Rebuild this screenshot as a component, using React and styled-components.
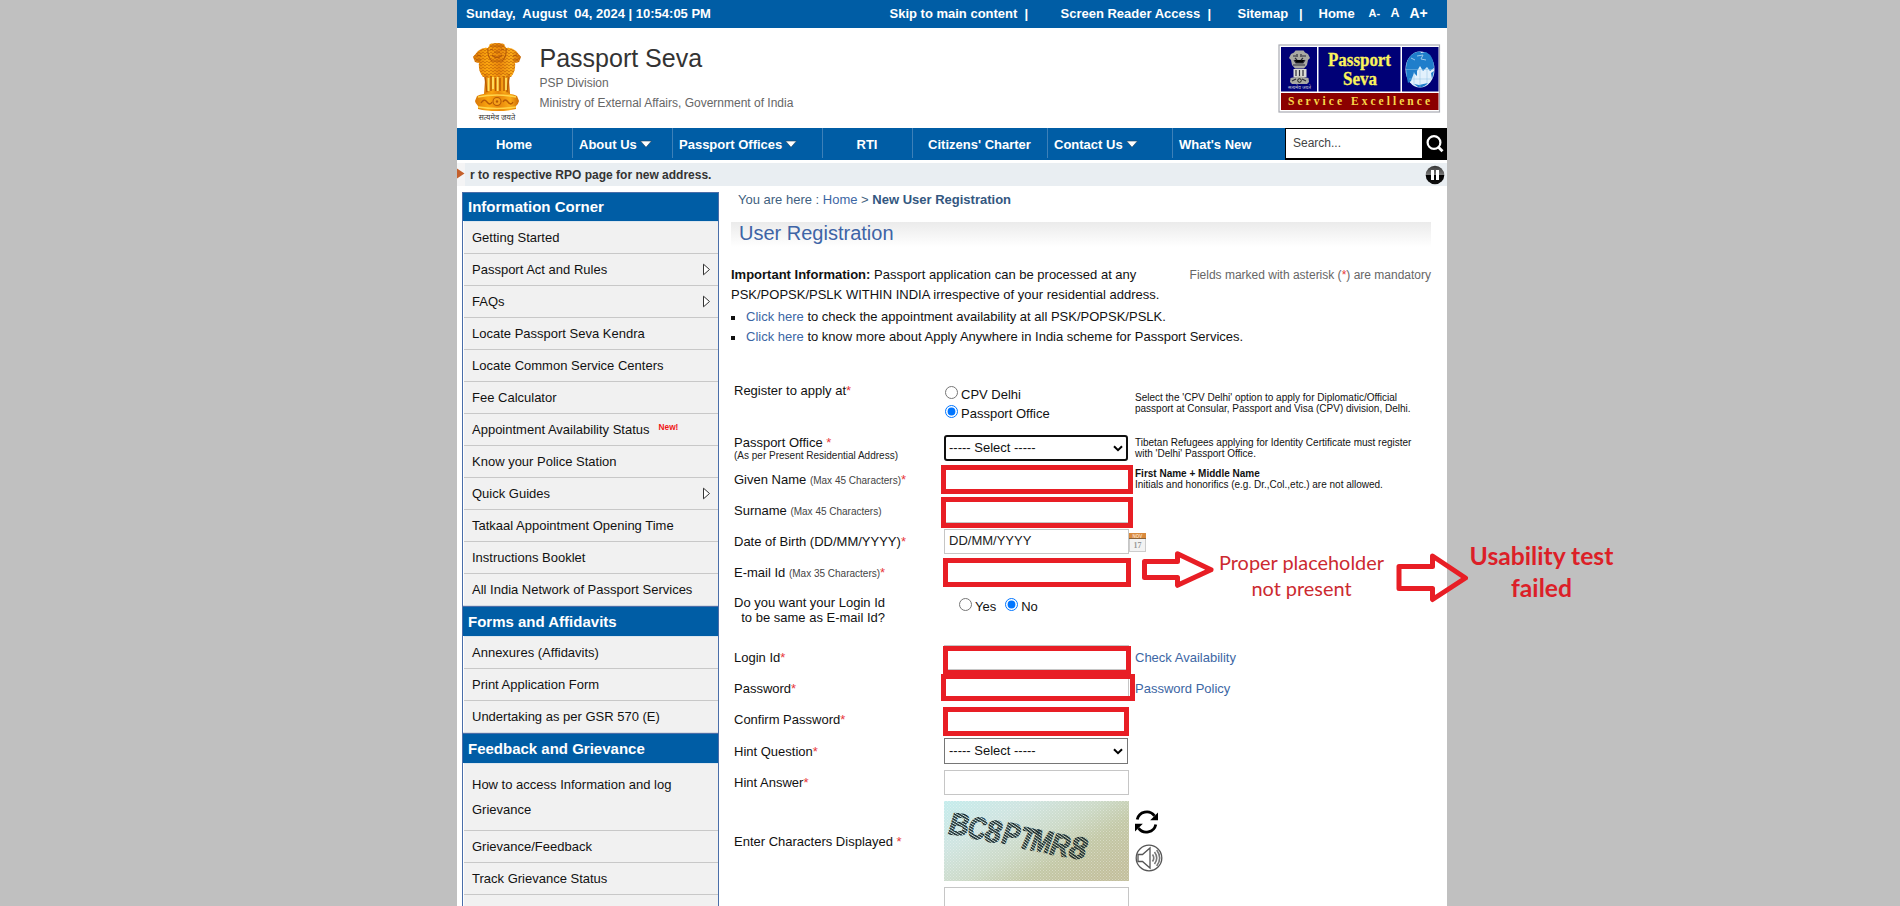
import React from "react";
import styled, { createGlobalStyle } from "styled-components";

const BLUE = "#005da5";
const RED = "#e81e25";

const GlobalStyle = createGlobalStyle`
  html, body { margin: 0; padding: 0; background: #c0c0c0; }
  body { height: 906px; overflow: hidden; font: 13px "Liberation Sans", Arial, sans-serif; color: #111; }
  * { box-sizing: border-box; }
`;

const Screen = styled.div`
  position: relative;
  width: 1900px;
  height: 906px;
  overflow: hidden;
`;
const Page = styled.div`
  width: 990px;
  height: 906px;
  margin-left: 457px;
  background: #fff;
  overflow: hidden;
`;

/* ---------- top bar ---------- */
const TopBar = styled.div`
  height: 28px;
  background: ${BLUE};
  color: #fff;
  font-weight: bold;
  display: flex;
  align-items: center;
  padding: 0 19px 2px 9px;
  white-space: pre;
`;
const TopLinks = styled.div`
  display: flex;
  align-items: center;
  margin-left: auto;
`;
const TopLink = styled.span`
  width: ${(p) => p.$w}px;
  font-size: ${(p) => p.$size || 13}px;
`;

/* ---------- header ---------- */
const Header = styled.header`
  height: 100px;
  display: flex;
  padding: 15px 6px 0 14px;
`;
const Brand = styled.div`
  margin-left: 17.5px;
  display: flex;
  flex-direction: column;
`;
const BrandTitle = styled.h1`
  margin: -1px 0 -1px;
  font-weight: normal;
  font-size: 25px;
  line-height: 32px;
  color: #333;
`;
const BrandLine = styled.div`
  font-size: 12px;
  line-height: 20px;
  color: #666;
`;
const LogoSlot = styled.div`
  margin: 1px 0 0 auto;
`;

/* ---------- navigation ---------- */
const Nav = styled.nav`
  height: 32px;
  background: ${BLUE};
  display: flex;
  color: #fff;
  font-weight: bold;
`;
const NavItem = styled.div`
  width: ${(p) => p.$w}px;
  height: 30px;
  padding: ${(p) => (p.$center ? "2px 1px 0 0" : "2px 0 0 6px")};
  border-right: ${(p) => (p.$last ? "0" : "1px solid #3d80b8")};
  display: flex;
  align-items: center;
  gap: 3px;
  justify-content: ${(p) => (p.$center ? "center" : "flex-start")};
`;
const SearchBox = styled.div`
  flex: 1;
  display: flex;
  background: #000;
  padding: 1px 0 0 1px;
`;
const SearchInput = styled.div`
  width: 136px;
  height: 29px;
  background: #fff;
  color: #444;
  font: 12px "Liberation Sans", Arial, sans-serif;
  line-height: 29px;
  padding-left: 7px;
`;
const SearchButton = styled.div`
  flex: 1;
  display: flex;
  justify-content: center;
  padding-top: 5px;
`;

/* ---------- ticker ---------- */
const Ticker = styled.div`
  margin-top: 3px;
  height: 23px;
  display: flex;
  align-items: center;
  background: #e9eef2;
  padding-right: 2px;
  font-size: 12px;
  font-weight: bold;
  color: #333;
`;
const TickerArrow = styled.div`
  width: 8px;
  height: 23px;
  margin-right: 5px;
  background: #f4f4f5;
`;
const TickerText = styled.span`
  flex: 1;
`;

/* ---------- body ---------- */
const Columns = styled.div`
  display: flex;
  padding: 6px 16px 0 5px;
`;
const Sidebar = styled.aside`
  width: 257px;
  border: 1px solid #4a6ea9;
  border-bottom: 0;
  flex: none;
`;
const SideTitle = styled.div`
  height: ${(p) => (p.$first ? 28 : 29)}px;
  border-top: ${(p) => (p.$first ? "0" : "1px solid #4a6ea9")};
  box-sizing: content-box;
  background: ${BLUE};
  color: #fff;
  font-weight: bold;
  font-size: 15px;
  line-height: ${(p) => (p.$first ? 28 : 30)}px;
  padding-left: 5px;
`;
const SideItem = styled.div`
  margin: 0 0 0 1px;
  border-top: 1px solid ${(p) => (p.$top ? "#dde6ee" : "#c8c8c8")};
  background: #f1f1f1;
  height: ${(p) => p.$h || 32}px;
  padding: ${(p) => (p.$h ? "8px 20px 8px 8px" : "0 6px 0 8px")};
  display: flex;
  align-items: center;
  line-height: 25px;
`;
const SideEnd = styled.div`
  height: 1px;
  background: #d5dbe2;
`;
const SideLabel = styled.span`
  flex: 1;
`;
const NewTag = styled.sup`
  font-size: 8.3px;
  font-weight: bold;
  line-height: 0;
  color: #f01616;
  margin-left: 9px;
  vertical-align: 4px;
`;

const Main = styled.main`
  margin-left: 12px;
  width: 700px;
`;
const Crumbs = styled.div`
  height: 30px;
  line-height: 15px;
  padding-left: 7px;
  color: #3f5f80;
  b { color: #33577f; }
`;
const PageTitle = styled.h2`
  margin: 0;
  height: 25px;
  padding-left: 8px;
  line-height: 23px;
  font-size: 20px;
  font-weight: normal;
  color: #3e64a6;
  background: linear-gradient(#ebebeb, #fff);
`;
const Notice = styled.div`
  margin-top: 18px;
  display: flex;
  justify-content: space-between;
  line-height: 20px;
`;
const Mandatory = styled.div`
  font-size: 12px;
  color: #666;
`;
const Star = styled.span`
  color: #e8373a;
`;
const Links = styled.ul`
  list-style: none;
  margin: 2px 0 0;
  padding: 0;
  line-height: 20px;
  li { display: flex; align-items: center; }
`;
const Bullet = styled.i`
  width: 4px;
  height: 4px;
  background: #111;
  margin-right: 11px;
  margin-top: 1px;
`;
const Link = styled.a`
  color: #3c66a4;
`;
const Spaced = styled.span`
  white-space: pre;
`;

/* ---------- form ---------- */
const Form = styled.div`
  margin-top: 32px;
`;
const Row = styled.div`
  display: grid;
  grid-template-columns: 210px 191px 1fr;
  height: ${(p) => p.$h}px;
  padding-left: 3px;
`;
const Label = styled.div`
  padding-top: ${(p) => p.$top}px;
  line-height: 15px;
  white-space: pre;
`;
const Small = styled.span`
  font-size: 10px;
  line-height: 11px;
  color: ${(p) => p.$color || "#222"};
  display: ${(p) => (p.$block ? "block" : "inline")};
`;
const Cell = styled.div`
  padding-top: ${(p) => p.$top || 0}px;
`;
const Hint = styled.div`
  padding-top: ${(p) => p.$top}px;
  font-size: 10px;
  line-height: 11px;
  white-space: nowrap;
`;
const Inline = styled.div`
  display: flex;
  align-items: flex-start;
`;
const TextInput = styled.div`
  flex: none;
  width: 185px;
  height: 25px;
  border: 1px solid #c6c6c6;
  background: #fff;
  line-height: 22px;
  padding-left: 4px;
  color: #222;
`;
const SelectWrap = styled.div`
  width: 184px;
  height: 26px;
  background: #fff;
  border: ${(p) => (p.$focus ? "2px solid #101010" : "1px solid #767676")};
  border-radius: ${(p) => (p.$focus ? 3 : 0)}px;
  padding: 0 ${(p) => (p.$focus ? 3 : 4)}px;
  display: flex;
  align-items: center;
  justify-content: space-between;
`;
const SelectText = styled.span`
  margin-top: -1px;
`;
const Choice = styled.label`
  display: flex;
  align-items: flex-start;
  height: 19px;
  line-height: 17px;
  margin-left: ${(p) => p.$left || 0}px;
  input { width: 13px; height: 13px; margin: 0 3px 0 1px; }
`;
const IconStack = styled.div`
  display: flex;
  flex-direction: column;
  gap: 10px;
  padding-top: 12px;
`;
const CalendarSlot = styled.span`
  display: flex;
  flex: none;
  padding-top: 4px;
`;

/* ---------- review marks ---------- */
const Mark = styled.div`
  position: absolute;
  left: ${(p) => p.$x}px;
  top: ${(p) => p.$y}px;
  width: ${(p) => p.$w}px;
  height: ${(p) => p.$h}px;
  border: 5px solid ${RED};
`;
const ArrowLayer = styled.svg`
  position: absolute;
  left: 1138px;
  top: 546px;
`;
const Note = styled.div`
  position: absolute;
  left: ${(p) => p.$x}px;
  top: ${(p) => p.$y}px;
  width: ${(p) => p.$w}px;
  text-align: center;
  font: ${(p) => (p.$bold ? "bold 24.7px/32px" : "19.9px/26px")} Lato, sans-serif;
  color: ${(p) => (p.$bold ? "#dc1f28" : "#cc2a30")};
`;

const Caret = () => (
  <svg width="12" height="8" viewBox="0 0 12 8">
    <path d="M.5 1h11L6 7.300z" fill="#fff" stroke="#243f58" strokeWidth="0.6" />
  </svg>
);

const Emblem = () => (
  <svg width="50" height="72" viewBox="0 0 50 72">
    <defs>
      <linearGradient id="gold" x1="0" x2="1">
        <stop offset="0" stopColor="#d97706" />
        <stop offset=".3" stopColor="#fba50f" />
        <stop offset=".55" stopColor="#e8860b" />
        <stop offset=".8" stopColor="#fbab18" />
        <stop offset="1" stopColor="#cc6a05" />
      </linearGradient>
      <pattern id="curl" width="4" height="3" patternUnits="userSpaceOnUse">
        <path d="M0 1Q1 3 2 1T4 1" fill="none" stroke="#b85a05" strokeWidth=".7" opacity=".75" />
      </pattern>
    </defs>
    <g fill="url(#gold)">
      <path d="M18 1q7-2 14 0l2 4q5-1 10 3l5 6-2 5-4 1q1 8-4 14H11q-5-6-4-14l-4-1-2-5 5-6q5-4 10-3z" />
      <path d="M12 31h26l-1 6 1 14H12l1-14z" />
      <path d="M5 53q5-3 20-3t20 3l2 5q-1 4-3 5v3q-8 2-19 2T6 66v-3q-3-3-3-5z" />
    </g>
    <path d="M18 1q7-2 14 0l2 4q5-1 10 3l5 6-2 5-4 1q1 8-4 14H11q-5-6-4-14l-4-1-2-5 5-6q5-4 10-3z" fill="url(#curl)" />
    <path d="M18 3h14M18 7l3-1M29 6l3 1M20 12q5 5 10 0M22 9h6M16 5q-1 9 4 13h10q5-4 4-13M5 12l4 1M41 13l4-1M4 17h5M41 17h5" fill="none" stroke="#b45a08" strokeWidth="1.100" />
    <path d="M13 34l2 15M19 33v15M23.500 35v13M28 35v13M32 33v15M37 34l-2 15" stroke="#b65a04" strokeWidth="1.4" />
    <path d="M16.500 35v13M25.700 34v14M34 35v12M21 34v12" stroke="#ffdf62" strokeWidth="1.8" />
    <path d="M6 54q19-4 38 0M6 64q19 3 38 0" fill="none" stroke="#ffd54a" strokeWidth="1.4" />
    <circle cx="25" cy="58.500" r="4" fill="#f6a11a" stroke="#b55a06" strokeWidth="1.1" />
    <circle cx="25" cy="58.500" r="1.200" fill="#b55a06" />
    <path d="M9 60q3-5 6-1t5 0M31 59q2-4 5 0t5 0" fill="none" stroke="#b55a06" strokeWidth="1.3" />
  </svg>
);
const EmblemBlock = styled.div`
  width: 50px;
  margin-left: 1px;
`;
const Motto = styled.div`
  font: 7.5px "Noto Sans Devanagari", "Noto Sans", sans-serif;
  line-height: 8px;
  margin-top: -4px;
  white-space: nowrap;
  text-align: center;
  color: #333;
`;

const Logo = () => (
  <svg width="163" height="69" viewBox="0 0 163 69">
    <rect x="1" y="1" width="160.500" height="67" fill="#fff" stroke="#a9abb2" strokeWidth="1.200" />
    <rect x="3" y="3" width="36" height="44.500" fill="#000076" />
    <rect x="40.500" y="3" width="82" height="44.500" fill="#000076" />
    <rect x="124" y="3" width="36.500" height="44.500" fill="#000076" />
    <rect x="3" y="49" width="157.500" height="17" fill="#8b0000" />
    <g fill="#a9a9a2">
      <path d="M17.500 6.500h8l1.500 2 3 1.500 2 4-2 2-1 5-3 3.500H17l-3-3.500-1-5-2-2 2-4 3-1.500z" />
      <path d="M15.500 25h13v8h-13z" fill="#dcdcd4" />
      <path d="M12.500 34q9-3 18 0l.500 4-2 2H14l-2-2z" />
    </g>
    <path d="M15 12h3M24 12h4M19 10v3M23 10v3M16 16l2 3h7l2-3M18 26v6M21.500 26v6M25 26v6M14 37l4-2M28 37l-4-2M15 21h12M17 14l2 2M25 14l-2 2" stroke="#2d2d3a" strokeWidth="1.200" />
    <circle cx="21.500" cy="36.500" r="1.800" fill="none" stroke="#111" strokeWidth=".9" />
    <text x="10" y="45" fontSize="5" fill="#c9c9d8" textLength="23" lengthAdjust="spacingAndGlyphs" fontFamily="Noto Sans Devanagari, Noto Sans, sans-serif">सत्यमेव जयते</text>
    <g fontFamily="Liberation Serif, serif" fontWeight="bold" fill="#fbf35c" stroke="#fbf35c" strokeWidth=".3">
      <text x="50" y="22" fontSize="18" textLength="63" lengthAdjust="spacingAndGlyphs">Passport</text>
      <text x="65" y="41" fontSize="18" textLength="34" lengthAdjust="spacingAndGlyphs">Seva</text>
      <text x="10" y="61" fontSize="11.500" fill="#f8d84a" stroke="none" textLength="142">Service Excellence</text>
    </g>
    <ellipse cx="142" cy="25.500" rx="14.500" ry="18" fill="#e2f1fc" />
    <path d="M128 24q0-10 8-15 7-3 7 0l5-1q8 4 8 16l-4 3-3-4-4 4-3-5-3 5 0 5-3-3-3 8-3 2q-2-7-2-15zM153 29l3-2-2 8zM150 39q-4 5-10 4l-4-3 5 1z" fill="#1f7ecb" />
    <path d="M128 25.500h28M131 35h22M142 26v17M149 24v15M136 28v13" stroke="#8fc0e6" strokeWidth=".5" />
    <path d="M139 12l6-1-2 4 5 1M133 14l4 2" fill="none" stroke="#9cc9ea" strokeWidth="1" />
  </svg>
);

const SearchIcon = () => (
  <svg width="20" height="20" viewBox="0 0 20 20" fill="none" stroke="#fff" strokeWidth="2.200">
    <circle cx="9" cy="8.500" r="6.400" />
    <path d="M13.500 13.200l4 4" strokeWidth="2.800" />
  </svg>
);

const PauseIcon = () => (
  <svg width="20" height="20" viewBox="0 0 20 20">
    <defs>
      <linearGradient id="pause" x1="0" y1="0" x2="0" y2="1">
        <stop offset="0" stopColor="#333" />
        <stop offset=".48" stopColor="#777" />
        <stop offset=".5" stopColor="#000" />
        <stop offset="1" stopColor="#111" />
      </linearGradient>
    </defs>
    <circle cx="10" cy="10" r="9.300" fill="url(#pause)" />
    <path d="M6 5h3v10H6zM11 5h3v10h-3z" fill="#fff" />
  </svg>
);

const CalendarIcon = () => (
  <svg width="17" height="19" viewBox="0 0 17 19">
    <rect x=".5" y=".5" width="16" height="18" fill="#f3f3f3" stroke="#ccc" />
    <rect x="0" y="0" width="17" height="6" fill="#d98a3d" />
    <rect x="0" y="5" width="17" height="1" fill="#8a6238" />
    <text x="3.500" y="4.800" fontSize="4.500" fontWeight="bold" fill="#f7dcc0" fontFamily="Liberation Sans">NOV</text>
    <text x="4.500" y="15" fontSize="8" fill="#999" fontWeight="bold" fontFamily="Liberation Serif">17</text>
  </svg>
);

const Chevron = () => (
  <svg width="10" height="7" viewBox="0 0 10 7">
    <path d="M1 1.200L5 5.200 9 1.200" fill="none" stroke="#000" strokeWidth="2" />
  </svg>
);

const RefreshIcon = () => (
  <svg width="24" height="24" viewBox="0 0 24 24" fill="none" stroke="#000" strokeWidth="2.800">
    <path d="M2.200 9.500A9.700 9.700 0 0 1 19.500 5.800" />
    <path d="M20.800 14.500A9.700 9.700 0 0 1 3.500 18.200" />
    <path d="M23 2.500v7.800h-7.800z" fill="#000" stroke="none" />
    <path d="M0 21.500v-7.800h7.800z" fill="#000" stroke="none" />
  </svg>
);

const SpeakerIcon = () => (
  <svg width="28" height="28" viewBox="0 0 28 28" fill="none" stroke="#555" strokeWidth="1.300">
    <circle cx="14" cy="14" r="12.800" />
    <path d="M3 10.500h4.500l7.500-6.500v20l-7.500-6.500H3z" />
    <path d="M17.500 10.500q2.500 3.500 0 7M19.500 8q4.500 6 0 12M21.700 6q6 8 0 16" strokeWidth="1.600" stroke="#777" />
  </svg>
);

const LETTERS = [
  ["B", 4, 33, 6, 20], ["C", 23, 37, 6, 18], ["8", 40, 40, 8, 16], ["P", 57, 42, 10, 17],
  ["T", 73, 46, 14, 16], ["M", 86, 49, 10, 20], ["R", 105, 53, 10, 19], ["8", 124, 56, 10, 17],
];
const Captcha = () => (
  <svg width="185" height="80" viewBox="0 0 185 80">
    <defs>
      <linearGradient id="cap" x1="0" y1="0" x2="1" y2=".75">
        <stop offset="0" stopColor="#c4ecec" />
        <stop offset=".3" stopColor="#cfe4e0" />
        <stop offset=".55" stopColor="#cbd9c6" />
        <stop offset=".75" stopColor="#c3c8a6" />
        <stop offset="1" stopColor="#c2bf9c" />
      </linearGradient>
      <pattern id="mesh" width="3" height="3" patternUnits="userSpaceOnUse">
        <path d="M0 0h1v1H0zM1.500 1.500h1v1h-1z" fill="#fff" opacity=".35" />
      </pattern>
      <pattern id="stripe" width="2.400" height="2.400" patternUnits="userSpaceOnUse" patternTransform="rotate(25)">
        <path d="M0 0h2.400v1.400H0z" fill="#18292d" />
      </pattern>
    </defs>
    <rect width="185" height="80" fill="url(#cap)" />
    <rect width="185" height="80" fill="url(#mesh)" />
    {LETTERS.map(([ch, x, y, r, w], i) => (
      <text
        key={i}
        x={x}
        y={y}
        transform={`rotate(${r} ${x} ${y})`}
        fontFamily="Liberation Sans, Arial, sans-serif"
        fontStyle="italic"
        fontWeight="bold"
        fontSize="31"
        textLength={w}
        lengthAdjust="spacingAndGlyphs"
        fill="url(#stripe)"
        stroke="url(#stripe)"
        strokeWidth="1.200"
      >
        {ch}
      </text>
    ))}
  </svg>
);

const NAV = [
  { text: "Home", w: 116, center: true },
  { text: "About Us", w: 100, menu: true },
  { text: "Passport Offices", w: 150, menu: true },
  { text: "RTI", w: 90, center: true },
  { text: "Citizens' Charter", w: 135, center: true },
  { text: "Contact Us", w: 125, menu: true },
  { text: "What's New", w: 112, last: true },
];

const SECTIONS = [
  ["Information Corner", [
    ["Getting Started"], ["Passport Act and Rules", "sub"], ["FAQs", "sub"], ["Locate Passport Seva Kendra"],
    ["Locate Common Service Centers"], ["Fee Calculator"], ["Appointment Availability Status", "new"],
    ["Know your Police Station"], ["Quick Guides", "sub"], ["Tatkaal Appointment Opening Time"],
    ["Instructions Booklet"], ["All India Network of Passport Services"],
  ]],
  ["Forms and Affidavits", [["Annexures (Affidavits)"], ["Print Application Form"], ["Undertaking as per GSR 570 (E)"]]],
  ["Feedback and Grievance", [
    ["How to access Information and log Grievance", "tall"], ["Grievance/Feedback"], ["Track Grievance Status", "short"], ["Information"],
  ]],
];
const ITEM_HEIGHT = { tall: 67 };

const MARKS = [
  [941, 465, 192, 29], [941, 497, 192, 31], [943, 558, 188, 29],
  [943, 646, 188, 29], [941, 674, 194, 27], [943, 707, 186, 29],
];

const Select = ({ focus }) => (
  <SelectWrap $focus={focus}>
    <SelectText>----- Select -----</SelectText>
    <Chevron />
  </SelectWrap>
);

export default function App() {
  return (
    <Screen>
      <GlobalStyle />
      <Page>
        <TopBar>
          <span>{"Sunday,  August  04, 2024 | 10:54:05 PM"}</span>
          <TopLinks>
            <TopLink $w={135}>Skip to main content</TopLink>
            <TopLink $w={36}>|</TopLink>
            <TopLink $w={147}>Screen Reader Access</TopLink>
            <TopLink $w={30}>|</TopLink>
            <TopLink $w={61.5}>Sitemap</TopLink>
            <TopLink $w={19.500}>|</TopLink>
            <TopLink $w={50}>Home</TopLink>
            <TopLink $w={22} $size={11}>A-</TopLink>
            <TopLink $w={19} $size={12.500}>A</TopLink>
            <TopLink $w={18.500} $size={14}>A+</TopLink>
          </TopLinks>
        </TopBar>
        <Header>
          <EmblemBlock>
            <Emblem />
            <Motto>सत्यमेव जयते</Motto>
          </EmblemBlock>
          <Brand>
            <BrandTitle>Passport Seva</BrandTitle>
            <BrandLine>PSP Division</BrandLine>
            <BrandLine>Ministry of External Affairs, Government of India</BrandLine>
          </Brand>
          <LogoSlot><Logo /></LogoSlot>
        </Header>
        <Nav>
          {NAV.map((n) => (
            <NavItem key={n.text} $w={n.w} $center={n.center} $last={n.last}>
              <span>{n.text}</span>
              {n.menu && <Caret />}
            </NavItem>
          ))}
          <SearchBox>
            <SearchInput>Search...</SearchInput>
            <SearchButton><SearchIcon /></SearchButton>
          </SearchBox>
        </Nav>
        <Ticker>
          <TickerArrow>
            <svg width="8" height="23" viewBox="0 0 8 23"><path d="M0 5.500l7.500 5L0 15.500z" fill="#c4602c" /></svg>
          </TickerArrow>
          <TickerText>r to respective RPO page for new address.</TickerText>
          <PauseIcon />
        </Ticker>
        <Columns>
          <Sidebar>
            {SECTIONS.map(([title, items], s) => (
              <React.Fragment key={title}>
                <SideTitle $first={s === 0}>{title}</SideTitle>
                {items.map(([text, kind], i) => (
                  <SideItem key={text} $top={i === 0} $h={ITEM_HEIGHT[kind]}>
                    <SideLabel>
                      {text}
                      {kind === "new" && <NewTag>New!</NewTag>}
                    </SideLabel>
                    {kind === "sub" && (
                      <svg width="10" height="13" viewBox="0 0 10 13">
                        <path d="M1.500 1.200l6 5.300-6 5.300z" fill="#fff" stroke="#333" />
                      </svg>
                    )}
                  </SideItem>
                ))}
                <SideEnd />
              </React.Fragment>
            ))}
          </Sidebar>
          <Main>
            <Crumbs>You are here : <Link>Home</Link> &gt; <b>New User Registration</b></Crumbs>
            <PageTitle>User Registration</PageTitle>
            <Notice>
              <div>
                <b>Important Information:</b> Passport application can be processed at any
                <br />
                PSK/POPSK/PSLK WITHIN INDIA irrespective of your residential address.
              </div>
              <Mandatory>Fields marked with asterisk (<Star>*</Star>) are mandatory</Mandatory>
            </Notice>
            <Links>
              <li><Bullet /><Spaced><Link>Click here</Link> to check the appointment availability at all PSK/POPSK/PSLK.</Spaced></li>
              <li><Bullet /><Spaced><Link>Click here</Link> to know more about Apply Anywhere in India scheme for Passport Services.</Spaced></li>
            </Links>
            <Form>
              <Row $h={53}>
                <Label $top={4}>Register to apply at<Star>*</Star></Label>
                <Cell $top={7}>
                  <Choice><input type="radio" name="at" readOnly />CPV Delhi</Choice>
                  <Choice><input type="radio" name="at" checked readOnly />Passport Office</Choice>
                </Cell>
                <Hint $top={13}>
                  Select the 'CPV Delhi' option to apply for Diplomatic/Official<br />
                  passport at Consular, Passport and Visa (CPV) division, Delhi.
                </Hint>
              </Row>
              <Row $h={31}>
                <Label $top={3}>Passport Office <Star>*</Star><Small $block>(As per Present Residential Address)</Small></Label>
                <Cell $top={3}><Select focus /></Cell>
                <Hint $top={5}>
                  Tibetan Refugees applying for Identity Certificate must register<br />with 'Delhi' Passport Office.
                </Hint>
              </Row>
              <Row $h={31}>
                <Label $top={9}>Given Name <Small $color="#444">(Max 45 Characters)</Small><Star>*</Star></Label>
                <Cell $top={4}><TextInput /></Cell>
                <Hint $top={5}><b>First Name + Middle Name</b><br />Initials and honorifics (e.g. Dr.,Col.,etc.) are not allowed.</Hint>
              </Row>
              <Row $h={31}>
                <Label $top={9}>Surname <Small $color="#444">(Max 45 Characters)</Small></Label>
                <Cell $top={4}><TextInput /></Cell>
              </Row>
              <Row $h={31}>
                <Label $top={9}>Date of Birth (DD/MM/YYYY)<Star>*</Star></Label>
                <Cell $top={4}><Inline><TextInput>DD/MM/YYYY</TextInput><CalendarSlot><CalendarIcon /></CalendarSlot></Inline></Cell>
              </Row>
              <Row $h={31}>
                <Label $top={9}>E-mail Id <Small $color="#444">(Max 35 Characters)</Small><Star>*</Star></Label>
                <Cell $top={4}><TextInput /></Cell>
              </Row>
              <Row $h={54}>
                <Label $top={8}>{"Do you want your Login Id\n  to be same as E-mail Id?"}</Label>
                <Cell $top={11}>
                  <Inline>
                    <Choice $left={14}><input type="radio" name="same" readOnly />Yes</Choice>
                    <Choice $left={8}><input type="radio" name="same" checked readOnly />No</Choice>
                  </Inline>
                </Cell>
              </Row>
              <Row $h={31}>
                <Label $top={9}>Login Id<Star>*</Star></Label>
                <Cell $top={4}><TextInput /></Cell>
                <Label $top={9}><Link>Check Availability</Link></Label>
              </Row>
              <Row $h={31}>
                <Label $top={9}>Password<Star>*</Star></Label>
                <Cell $top={3}><TextInput /></Cell>
                <Label $top={9}><Link>Password Policy</Link></Label>
              </Row>
              <Row $h={31}>
                <Label $top={9}>Confirm Password<Star>*</Star></Label>
                <Cell $top={4}><TextInput /></Cell>
              </Row>
              <Row $h={32}>
                <Label $top={10}>Hint Question<Star>*</Star></Label>
                <Cell $top={4}><Select /></Cell>
              </Row>
              <Row $h={32}>
                <Label $top={9}>Hint Answer<Star>*</Star></Label>
                <Cell $top={4}><TextInput /></Cell>
              </Row>
              <Row $h={86}>
                <Label $top={36}>Enter Characters Displayed <Star>*</Star></Label>
                <Cell $top={3}><Captcha /></Cell>
                <IconStack><RefreshIcon /><SpeakerIcon /></IconStack>
              </Row>
              <Row $h={30}>
                <span />
                <Cell $top={3}><TextInput /></Cell>
              </Row>
            </Form>
          </Main>
        </Columns>
      </Page>
      {MARKS.map(([x, y, w, h]) => (
        <Mark key={y} $x={x} $y={y} $w={w} $h={h} />
      ))}
      <ArrowLayer width="336" height="62" fill="none" stroke={RED} strokeWidth="5" strokeLinejoin="round">
        <path d="M6.500 15.500h33V7.800l33.500 16-33.500 15.500V31.500h-33z" />
        <path d="M261 20.500h33.500V10l33 22-33 21.500V42.500h-33.500z" />
      </ArrowLayer>
      <Note $x={1201.5} $y={549} $w={200}>Proper placeholder<br />not present</Note>
      <Note $x={1441.5} $y={540} $w={200} $bold>Usability test<br />failed</Note>
    </Screen>
  );
}
